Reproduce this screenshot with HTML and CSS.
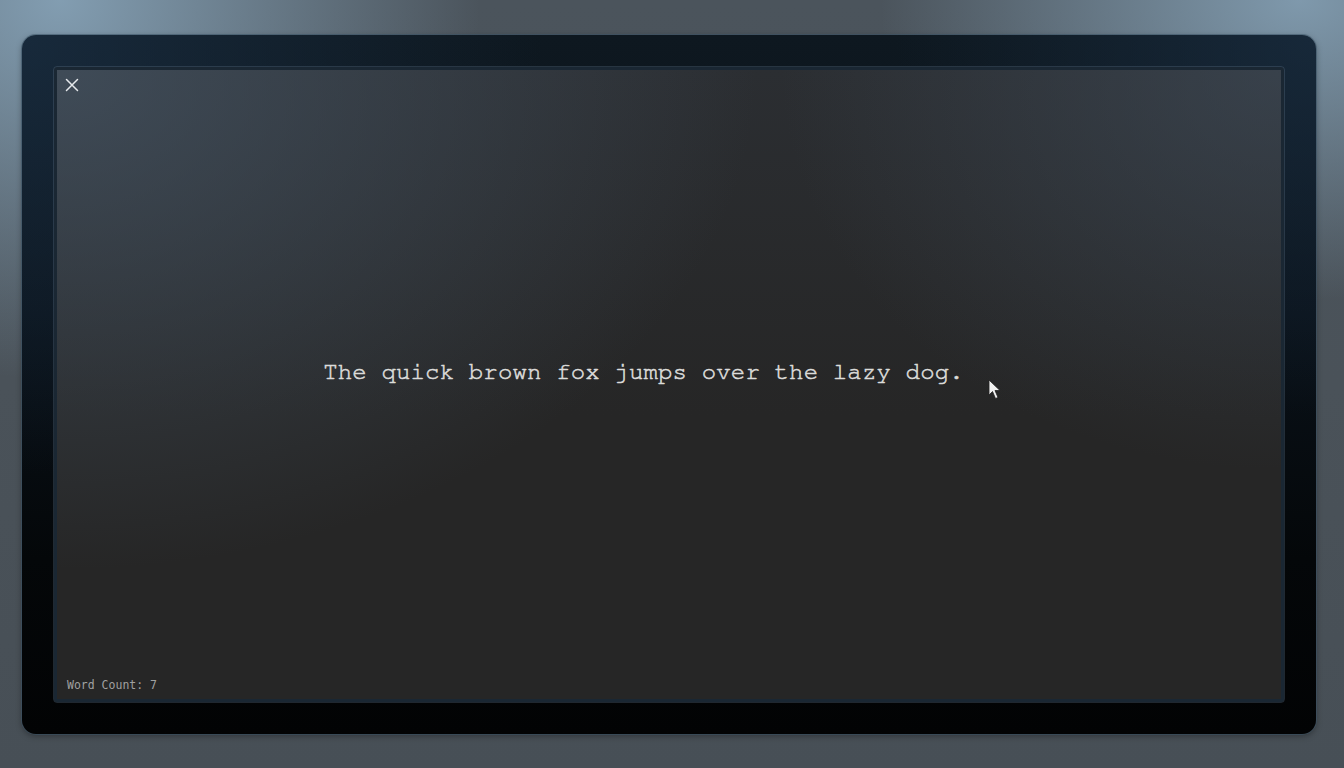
FILE: index.html
```html
<!DOCTYPE html>
<html lang="en">
<head>
<meta charset="utf-8">
<title>Focus Writer</title>
<link rel="stylesheet" href="styles.css">
</head>
<body>
<div class="stage">
  <div class="frame">
    <div class="panel">
      <button class="close" aria-label="Close">
        <svg width="14" height="14" viewBox="0 0 14 14"><path d="M1.5 1.5 L12.5 12.5 M12.5 1.5 L1.5 12.5" stroke="#e6e9ec" stroke-width="1.5" stroke-linecap="round"/></svg>
      </button>
      <div class="editor">
        <p class="line">The quick brown fox jumps over the lazy dog.</p>
      </div>
      <div class="status">Word Count: 7</div>
      <svg class="pointer" width="14" height="22" viewBox="0 0 14 22"><path d="M1 1 L1 16 L4.5 12.5 L7.5 19.5 L10 18.5 L7 11.5 L12 11.5 Z" fill="#f2f2f2" stroke="#222" stroke-width="0.8"/></svg>
    </div>
  </div>
</div>
</body>
</html>
```
FILE: styles.css
```css
html, body {
  margin: 0;
  padding: 0;
  height: 100%;
}
body {
  width: 1344px;
  height: 768px;
  overflow: hidden;
  background:
    radial-gradient(ellipse 420px 380px at 60px 0px, rgba(140,170,192,0.85), rgba(140,170,192,0) 100%),
    radial-gradient(ellipse 420px 300px at 1300px 0px, rgba(140,170,192,0.8), rgba(140,170,192,0) 100%),
    linear-gradient(180deg, #4b545c 0%, #4a5259 50%, #474f56 100%);
  font-family: "Liberation Mono", "DejaVu Sans Mono", monospace;
}
.stage {
  padding: 35px 28px 34px 22px;
  box-sizing: border-box;
  height: 768px;
}
.frame {
  height: 699px;
  width: 1294px;
  box-sizing: border-box;
  padding: 32px;
  border-radius: 14px;
  background:
    radial-gradient(ellipse 520px 440px at 0px 0px, rgba(26,46,66,0.8), rgba(26,46,66,0) 100%),
    radial-gradient(ellipse 420px 380px at 100% 0px, rgba(26,46,66,0.75), rgba(26,46,66,0) 100%),
    linear-gradient(180deg, #0e1820 0%, #0a121a 40%, #040709 75%, #020304 100%);
  box-shadow: 0 0 0 1px rgba(60,85,105,0.55), 0 2px 6px rgba(0,0,0,0.35);
}
.panel {
  position: relative;
  height: 100%;
  box-sizing: border-box;
  border: 3px solid #1a2733;
  border-radius: 3px;
  outline: 1px solid rgba(90,110,130,0.35);
  background:
    radial-gradient(ellipse 700px 500px at 0px 0px, rgba(70,85,100,0.75), rgba(70,85,100,0) 100%),
    radial-gradient(ellipse 500px 400px at 100% 0px, rgba(65,78,92,0.6), rgba(65,78,92,0) 100%),
    linear-gradient(180deg, #2b2e32 0%, #262626 55%, #262626 100%);
  display: flex;
  flex-direction: column;
}
.close {
  position: absolute;
  left: 8px;
  top: 8px;
  width: 14px;
  height: 14px;
  padding: 0;
  border: 0;
  background: none;
  display: block;
}
.close svg { display: block; }
.editor {
  flex: 1;
  display: flex;
  align-items: center;
  justify-content: center;
}
.line {
  margin: -4px 51px 0 0;
  font-family: "Nimbus Mono PS", "Nimbus Mono L", "FreeMono", "Courier Prime", "Liberation Mono", monospace;
  font-size: 24px;
  letter-spacing: 0.16px;
  color: #dcdcda;
  -webkit-text-stroke: 0.55px #dcdcda;
}
.status {
  padding: 0 0 6px 10px;
  font-family: "DejaVu Sans Mono", monospace;
  font-size: 11.5px;
  color: #a0a0a0;
  line-height: 16px;
}
.pointer {
  position: absolute;
  left: 931px;
  top: 309px;
}
```
